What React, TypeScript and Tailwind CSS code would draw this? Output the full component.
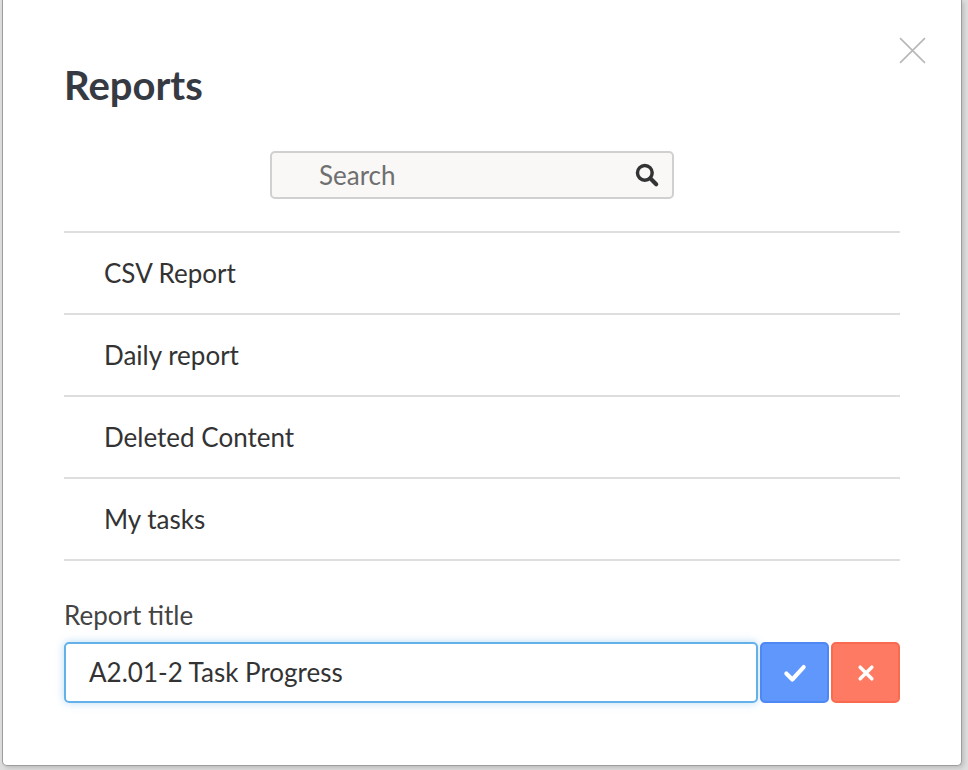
import React from "react";

const items = ["CSV Report", "Daily report", "Deleted Content", "My tasks"];

export default function App() {
  return (
    <div
      className="w-[968px] h-[770px] bg-[#dedede] overflow-hidden"
      style={{ fontFamily: "Lato, 'Noto Sans', sans-serif" }}
    >
      <div className="relative ml-[2px] w-[960px] h-[766px] bg-white border-x border-b border-[#9d9d9d] rounded-b-[5px] shadow-[2px_2px_4px_rgba(0,0,0,0.15)] pl-[61px] pr-[61px]">
        {/* close */}
        <button className="absolute top-[37px] right-[35px] w-[27px] h-[27px] text-[#b8b8b8]">
          <svg viewBox="0 0 26 26" width="27" height="27" fill="none" stroke="currentColor" strokeWidth="1.6">
            <path d="M1 1 L25 25 M25 1 L1 25" />
          </svg>
        </button>

        <h1 className="pt-[62px] h-[108px] text-[40px] leading-[46px] font-bold text-[#363a43]">Reports</h1>

        <div className="mt-[43px] ml-[206px] w-[404px] h-[48px] flex items-center bg-[#f9f8f6] border-2 border-[#d0d0d0] rounded-[5px] pl-[47px] pr-[12px]">
          <span className="flex-1 text-[26px] text-[#6f6f6f]">Search</span>
          <svg viewBox="0 0 24 24" width="26" height="26" fill="none" stroke="#333" strokeLinecap="round">
            <circle cx="10" cy="10" r="6.8" strokeWidth="3.2" />
            <path d="M15.2 15.2 L20.5 20.5" strokeWidth="3.8" />
          </svg>
        </div>

        <ul className="mt-[32px] border-t-2 border-[#dedede]">
          {items.map((it) => (
            <li
              key={it}
              className="h-[82px] flex items-center pl-[40px] border-b-2 border-[#dedede] text-[26px] text-[#333]"
            >
              {it}
            </li>
          ))}
        </ul>

        <div className="mt-[38px] text-[26px] leading-[32px] text-[#444]">Report title</div>

        <div className="mt-[11px] flex gap-[2px] h-[61px]">
          <div className="flex-1 flex items-center border-2 border-[#64b0e8] rounded-[5px] shadow-[0_0_8px_rgba(100,176,232,0.45)] pl-[23px] text-[26px] text-[#333]">
            A2.01-2 Task Progress
          </div>
          <button className="w-[69px] flex items-center justify-center bg-[#5f97fc] border-2 border-[#4e88f3] rounded-[5px]">
            <svg viewBox="0 0 24 24" width="26" height="26" fill="none" stroke="white" strokeWidth="3.8" strokeLinecap="round" strokeLinejoin="round">
              <path d="M4 12.5 L9.5 18 L20 6.5" />
            </svg>
          </button>
          <button className="w-[69px] flex items-center justify-center bg-[#ff7a62] border-2 border-[#fa6a51] rounded-[5px]">
            <svg viewBox="0 0 24 24" width="20" height="20" fill="none" stroke="white" strokeWidth="4.2" strokeLinecap="round">
              <path d="M5 5 L19 19 M19 5 L5 19" />
            </svg>
          </button>
        </div>
      </div>
    </div>
  );
}
